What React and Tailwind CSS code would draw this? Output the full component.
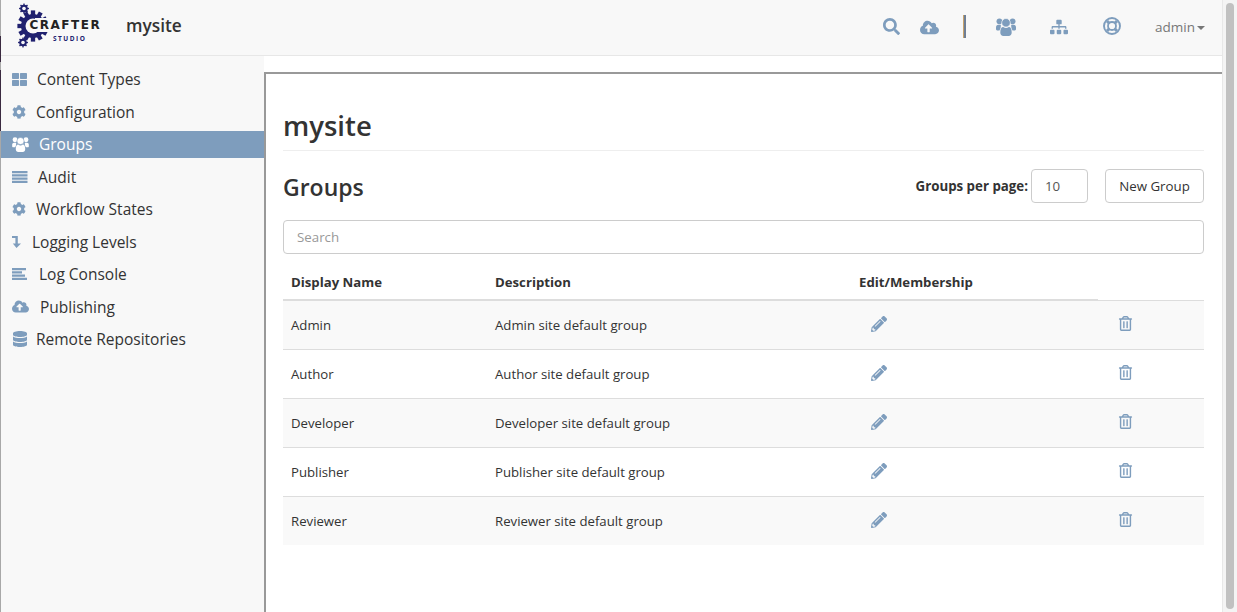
import React from "react";
import { FaSearch, FaCloudUploadAlt, FaSitemap, FaThLarge, FaCog, FaDatabase, FaPencilAlt, FaRegTrashAlt } from "react-icons/fa";

function UsersIcon({ width, height, bg }) {
  return (
    <svg width={width} height={height} viewBox="0 0 20 18" fill="currentColor">
      <circle cx="3.4" cy="3.3" r="2.9" />
      <circle cx="16.6" cy="3.3" r="2.9" />
      <path d="M0 9.5C0 7.6 1 6.8 2.2 6.8h2.6C5 9 4.5 11 3.4 12.4H1.2C.5 12.4 0 11.8 0 11z" />
      <path d="M20 9.5C20 7.6 19 6.8 17.8 6.8h-2.6c-.2 2.2.3 4.2 1.4 5.6h2.2c.7 0 1.200-.6 1.200-1.400z" />
      <circle cx="10" cy="4.800" r="4.300" stroke={bg} strokeWidth=".7" />
      <path d="M4.300 14.500c0-3.500 1-5.500 2.900-5.500 1 .7 1.800 1.100 2.800 1.100s1.800-.4 2.800-1.100c1.900 0 2.900 2 2.900 5.500 0 2.300-1.300 3.500-3 3.500H7.300c-1.700 0-3-1.200-3-3.500z" />
    </svg>
  );
}

function LifeRingIcon() {
  return (
    <svg width="18" height="18" viewBox="0 0 18 18" fill="none" stroke="currentColor" className="mt-[-3px] mr-[34px]">
      <circle cx="9" cy="9" r="8" strokeWidth="1.900" />
      <circle cx="9" cy="9" r="4" strokeWidth="1.800" />
      <path d="M4 4l2.500 2.500M14 4l-2.500 2.500M4 14l2.500-2.500M14 14l-2.500-2.500" strokeWidth="3" />
    </svg>
  );
}

function LinesIcon({ widths }) {
  return (
    <svg width="16" height="12" viewBox="0 0 16 12" fill="currentColor">
      {widths.map((w, i) => (
        <rect key={i} x="0" y={i * 3.25} width={w} height="2.250" />
      ))}
    </svg>
  );
}

const AuditIcon = () => <LinesIcon widths={[15.500, 15.500, 15.500, 15.500]} />;
const LogIcon = () => <LinesIcon widths={[14, 10, 13, 15]} />;
const LevelIcon = () => (
  <svg width="9" height="12" viewBox="0 0 9 12" fill="currentColor">
    <path d="M0 0h5.800v7.500H9L4.500 12 .8 7.500h2.600V2H0z" />
  </svg>
);
const GroupsNavIcon = ({ bg }) => <UsersIcon width={17} height={15} bg={bg} />;

const nav = [
  { label: "Content Types", Icon: () => <FaThLarge size={15} />, text: 37 },
  { label: "Configuration", Icon: () => <FaCog size={14} />, text: 36 },
  { label: "Groups", Icon: () => <GroupsNavIcon bg="#7e9dbd" />, text: 39, active: true },
  { label: "Audit", Icon: AuditIcon, text: 38 },
  { label: "Workflow States", Icon: () => <FaCog size={14} />, text: 36 },
  { label: "Logging Levels", Icon: LevelIcon, text: 32 },
  { label: "Log Console", Icon: LogIcon, text: 39 },
  { label: "Publishing", Icon: () => <FaCloudUploadAlt size={17} />, text: 40 },
  { label: "Remote Repositories", Icon: () => <FaDatabase size={16} />, text: 36 },
];

const groups = [
  ["Admin", "Admin site default group"],
  ["Author", "Author site default group"],
  ["Developer", "Developer site default group"],
  ["Publisher", "Publisher site default group"],
  ["Reviewer", "Reviewer site default group"],
];

function Gear({ cx, cy, r, teeth, hole }) {
  const items = [];
  for (let i = 0; i < teeth; i++) {
    const a = (360 / teeth) * i;
    items.push(
      <rect key={i} x={cx - r * 0.18} y={cy - r * 1.3} width={r * 0.36} height={r * 0.5} transform={`rotate(${a} ${cx} ${cy})`} fill="#20216f" />
    );
  }
  return (
    <g>
      {items}
      <circle cx={cx} cy={cy} r={r} fill="#20216f" />
      <circle cx={cx} cy={cy} r={hole} fill="#f8f8f8" />
    </g>
  );
}

function Logo() {
  return (
    <svg width="84" height="48" viewBox="0 0 84 48" className="shrink-0">
      <Gear cx={8} cy={5.500} r={3.800} teeth={8} hole={1.800} />
      <Gear cx={7} cy={39.500} r={3.800} teeth={8} hole={1.800} />
      <Gear cx={17} cy={23} r={12} teeth={12} hole={7.500} />
      <rect x="19" y="15" width="14" height="14" fill="#f8f8f8" />
      <text x="13.500" y="25.500" fontFamily="'DejaVu Sans', sans-serif" fontWeight="700" fontSize="12" letterSpacing="1.500" fill="#222">CRAFTER</text>
      <text x="37" y="37.500" fontFamily="'Open Sans', sans-serif" fontWeight="700" fontSize="6.500" letterSpacing="1.500" fill="#20216f">STUDIO</text>
    </svg>
  );
}

export default function App() {
  return (
    <div className="relative flex h-[612px] w-[1237px] overflow-hidden bg-white text-[#333] font-['Open_Sans',sans-serif]">
      <div className="absolute left-0 top-0 z-10 h-full w-px bg-[linear-gradient(180deg,#aaa_0,#aaa_36px,#3a2a40_36px,#3a2a40_62px,#aaa_62px,#aaa_70px,#3a2a40_70px,#3a2a40_131px,#a8a8a8_131px)]" />
      <div className="flex min-w-0 w-[1222px] flex-col">
        <header className="flex h-[56px] shrink-0 items-center border-b border-[#e7e7e7] bg-[#f8f8f8]">
          <div className="ml-[16px] mt-[-2px]"><Logo /></div>
          <span className="ml-[26px] mt-[-4px] text-[17.300px] font-semibold text-[#333]">mysite</span>
          <div className="ml-auto flex items-center text-[#7e9dbd]">
            <FaSearch size={17} className="mr-[20px] mt-[-2px]" />
            <FaCloudUploadAlt size={19} className="mr-[24px] mt-[-1px]" />
            <div className="mr-[30px] mt-[-3px] h-[23px] w-[3px] bg-[linear-gradient(90deg,#c9a36b_33%,#6f7f95_33%)]" />
            <span className="mr-[34px] mt-[-2px]"><UsersIcon width={20} height={18} bg="#f8f8f8" /></span>
            <FaSitemap size={18} className="mr-[35px] mt-[-2px]" />
            <LifeRingIcon />
            <span className="mr-[17px] flex items-center text-[13.500px] text-[#777]">
              admin
              <span className="ml-[2px] mt-[1px] h-0 w-0 border-x-[4px] border-t-[4px] border-x-transparent border-t-[#777]" />
            </span>
          </div>
        </header>
        <div className="flex min-h-0 flex-1">
          <aside className="flex w-[264px] shrink-0 flex-col gap-[5.500px] border-l border-[#a8a8a8] bg-[#f8f8f8] pt-[9.500px]">
            {nav.map(({ label, Icon, text, active }) => (
              <div key={label} className={`flex h-[27px] items-center text-[15.500px] ${active ? "bg-[#7e9dbd] text-white" : "text-[#333]"}`}>
                <span className={`ml-[11px] flex w-[18px] ${active ? "text-white" : "text-[#7e9dbd]"}`}>
                  <Icon />
                </span>
                <span className="pt-[2px]" style={{ marginLeft: text - 30 }}>{label}</span>
              </div>
            ))}
          </aside>
          <div className="flex min-w-0 flex-1 flex-col pt-[16px]">
            <main className="flex-1 border-l-2 border-t-2 border-[#999] pl-[17px] pr-[18px] pt-[30px]">
              <div className="flex h-[47px] items-center border-b border-[#eee] pb-[2px]">
                <h1 className="text-[27.500px] font-semibold leading-none text-[#333]">mysite</h1>
              </div>
              <div className="mt-[18px] flex h-[34px] items-center text-[13.300px]">
                <h2 className="pt-[2px] text-[23px] font-semibold leading-none text-[#333]">Groups</h2>
                <label className="ml-auto pt-[2px] font-bold text-[#333]">Groups per page:</label>
                <div className="ml-[3px] flex h-[34px] w-[57px] items-center rounded border border-[#ccc] pl-[13px] pt-[1px] text-[#555]">10</div>
                <button className="ml-[17px] h-[34px] w-[99px] rounded border border-[#ccc] bg-white pt-[1px] text-[#333]">New Group</button>
              </div>
              <div className="mt-[17px] flex h-[34px] items-center rounded border border-[#ccc] pl-[13px] pt-[2px] text-[13.300px] text-[#999]">Search</div>
              <table className="mt-[9px] w-full table-fixed border-collapse text-[13.200px]">
                <thead>
                  <tr className="h-[37px] border-b border-[#ddd] text-left">
                    <th className="w-[204px] border-b-2 border-[#ddd] pl-[8px] pt-[3px] font-bold">Display Name</th>
                    <th className="w-[364px] border-b-2 border-[#ddd] pl-[8px] pt-[3px] font-bold">Description</th>
                    <th className="w-[247px] border-b-2 border-[#ddd] pl-[8px] pt-[3px] font-bold">Edit/Membership</th>
                    <th />
                  </tr>
                </thead>
                <tbody>
                  {groups.map(([name, desc], i) => (
                    <tr key={name} className={`h-[49px] ${i < 4 ? "border-b border-[#ddd]" : ""} ${i % 2 === 0 ? "bg-[#f9f9f9]" : "bg-white"}`}>
                      <td className="pl-[8px] pt-[2px]">{name}</td>
                      <td className="pl-[8px] pt-[2px]">{desc}</td>
                      <td className="pl-[20px] pt-[2px] text-[#7e9dbd]"><FaPencilAlt size={16} className="mt-[-3px]" /></td>
                      <td className="pl-[20px] pt-[2px] text-[#7e9dbd]"><FaRegTrashAlt size={15} className="mt-[-5px]" /></td>
                    </tr>
                  ))}
                </tbody>
              </table>
            </main>
          </div>
        </div>
      </div>
      <div className="flex w-[15px] shrink-0 border-l border-[#e8e8e8] bg-[#f4f4f4] pl-[3px] pr-[3px] pt-[3px]">
        <div className="h-[606px] w-[8px] rounded-full bg-[#c1c1c1]" />
      </div>
    </div>
  );
}
